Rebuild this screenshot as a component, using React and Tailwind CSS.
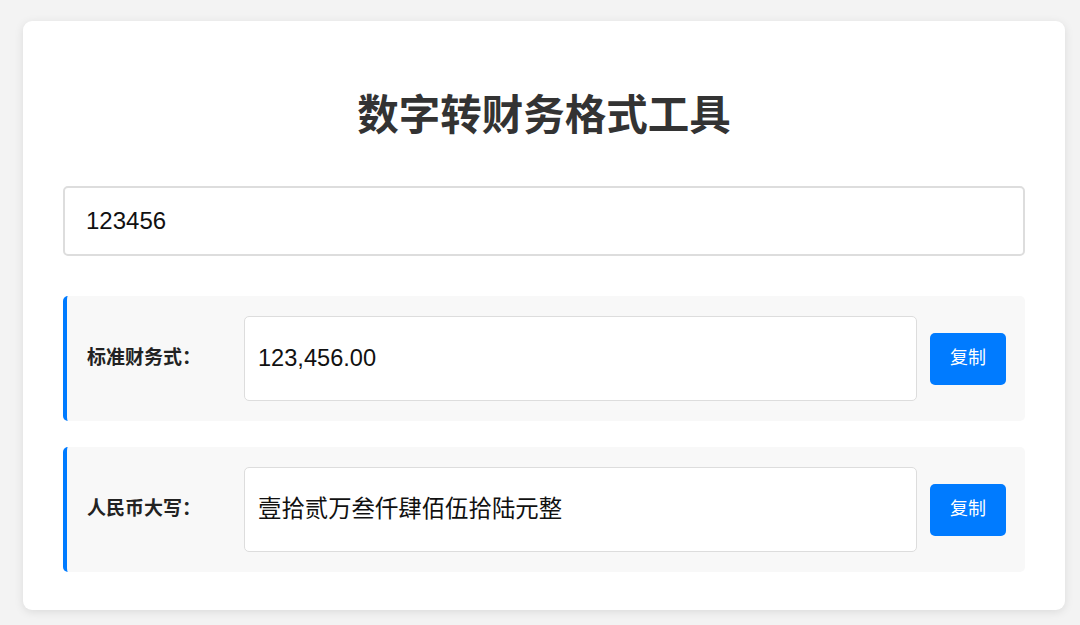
import React from "react";

const font = { fontFamily: '"Liberation Sans", "Noto Sans CJK SC", sans-serif' };

function Row({ label, value, size }) {
  return (
    <div className="flex items-center bg-[#f8f8f8] border-l-4 border-[#007bff] rounded-[5px] py-[20px] pl-[20px] pr-[19px]">
      <div className="w-[157px] shrink-0 text-[19px] font-bold text-[#222]">{label}</div>
      <div className={`flex-1 h-[85px] bg-white border border-[#ddd] rounded-[5px] pl-[13px] flex items-center text-[#111] ${size}`}>
        {value}
      </div>
      <button className="ml-[13px] w-[76px] h-[52px] shrink-0 bg-[#007bff] text-white text-[18px] rounded-[5px]">
        复制
      </button>
    </div>
  );
}

export default function App() {
  return (
    <div className="min-h-[625px] bg-[#f3f3f3] pl-[23px] pt-[21px]" style={font}>
      <div className="w-[1042px] bg-white rounded-[9px] shadow-[0_2px_10px_rgba(0,0,0,0.1)] px-[40px] pt-[40px] pb-[38px]">
        <h1 className="mt-[30px] mb-[45px] h-[50px] leading-[50px] text-center text-[41.5px] font-bold text-[#333]">
          数字转财务格式工具
        </h1>
        <div className="h-[70px] border-2 border-[#ddd] rounded-[5px] px-[21px] flex items-center text-[24px] text-[#111]">
          123456
        </div>
        <div className="mt-[40px] flex flex-col gap-[26px]">
          <Row label="标准财务式：" value="123,456.00" size="text-[23.6px]" />
          <Row label="人民币大写：" value="壹拾贰万叁仟肆佰伍拾陆元整" size="text-[23.4px]" />
        </div>
      </div>
    </div>
  );
}
